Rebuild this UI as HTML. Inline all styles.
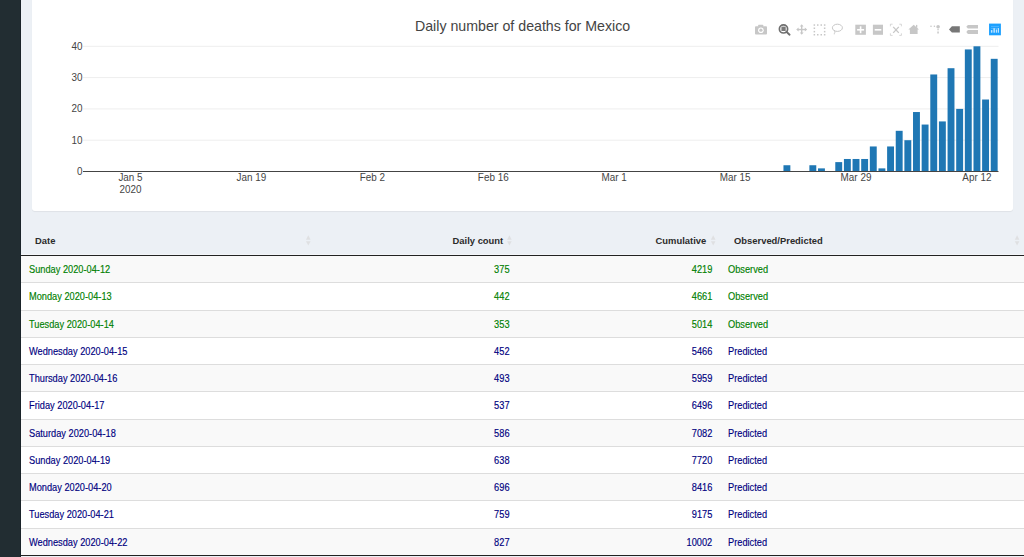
<!DOCTYPE html>
<html><head><meta charset="utf-8">
<style>
html,body{margin:0;padding:0;width:1024px;height:557px;overflow:hidden;background:#ecf0f5;font-family:"Liberation Sans",sans-serif;}
.side{position:absolute;left:0;top:0;width:21px;height:557px;background:#222d32;}
.card{position:absolute;left:32px;top:-40px;width:981px;height:251px;background:#fff;border-radius:3px;box-shadow:0 1px 1px rgba(0,0,0,0.06);}
svg.ch{position:absolute;left:0;top:0;}
.row{position:absolute;left:21px;width:1003px;}
.bl{position:absolute;left:21px;width:1003px;height:1px;background:#ddd;}
.hb{position:absolute;left:21px;width:1003px;height:1px;background:#222;}
.t{position:absolute;font-size:10.5px;line-height:normal;white-space:nowrap;transform:scaleX(0.88);transform-origin:0 0;-webkit-text-stroke:0.15px currentColor;}
.r{transform-origin:100% 0;}
.h{position:absolute;font-size:9.7px;font-weight:bold;color:#2b2b2b;white-space:nowrap;transform:scaleX(0.97);transform-origin:0 0;}
.hr{transform-origin:100% 0;}
</style></head><body>
<div class="side"></div><div style="position:absolute;left:20px;top:0;width:1px;height:557px;background:#1a2329"></div>
<div class="card"></div>
<svg class="ch" width="1024" height="211">
<rect x="83" y="139.70" width="915.5" height="1" fill="#eee"/>
<rect x="83" y="108.40" width="915.5" height="1" fill="#eee"/>
<rect x="83" y="77.10" width="915.5" height="1" fill="#eee"/>
<rect x="83" y="45.80" width="915.5" height="1" fill="#eee"/>
<rect x="783.46" y="165.24" width="6.9" height="6.26" fill="#1f77b4"/>
<rect x="809.37" y="165.24" width="6.9" height="6.26" fill="#1f77b4"/>
<rect x="818.01" y="168.37" width="6.9" height="3.13" fill="#1f77b4"/>
<rect x="835.28" y="162.11" width="6.9" height="9.39" fill="#1f77b4"/>
<rect x="843.92" y="158.98" width="6.9" height="12.52" fill="#1f77b4"/>
<rect x="852.56" y="158.98" width="6.9" height="12.52" fill="#1f77b4"/>
<rect x="861.19" y="158.98" width="6.9" height="12.52" fill="#1f77b4"/>
<rect x="869.83" y="146.46" width="6.9" height="25.04" fill="#1f77b4"/>
<rect x="878.47" y="168.37" width="6.9" height="3.13" fill="#1f77b4"/>
<rect x="887.11" y="146.46" width="6.9" height="25.04" fill="#1f77b4"/>
<rect x="895.74" y="130.81" width="6.9" height="40.69" fill="#1f77b4"/>
<rect x="904.38" y="140.20" width="6.9" height="31.30" fill="#1f77b4"/>
<rect x="913.02" y="112.03" width="6.9" height="59.47" fill="#1f77b4"/>
<rect x="921.65" y="124.55" width="6.9" height="46.95" fill="#1f77b4"/>
<rect x="930.29" y="74.47" width="6.9" height="97.03" fill="#1f77b4"/>
<rect x="938.93" y="121.42" width="6.9" height="50.08" fill="#1f77b4"/>
<rect x="947.57" y="68.21" width="6.9" height="103.29" fill="#1f77b4"/>
<rect x="956.20" y="108.90" width="6.9" height="62.60" fill="#1f77b4"/>
<rect x="964.84" y="49.43" width="6.9" height="122.07" fill="#1f77b4"/>
<rect x="973.48" y="46.30" width="6.9" height="125.20" fill="#1f77b4"/>
<rect x="982.11" y="99.51" width="6.9" height="71.99" fill="#1f77b4"/>
<rect x="990.75" y="58.82" width="6.9" height="112.68" fill="#1f77b4"/>
<rect x="83" y="171" width="915.5" height="1" fill="#444"/>
<g font-family="Liberation Sans, sans-serif" font-size="10.0" fill="#444">
<text transform="translate(82.4 174.90) scale(0.99 1)" text-anchor="end">0</text>
<text transform="translate(82.4 143.60) scale(0.99 1)" text-anchor="end">10</text>
<text transform="translate(82.4 112.30) scale(0.99 1)" text-anchor="end">20</text>
<text transform="translate(82.4 81.00) scale(0.99 1)" text-anchor="end">30</text>
<text transform="translate(82.4 49.70) scale(0.99 1)" text-anchor="end">40</text>
<text transform="translate(130.50 181) scale(0.99 1)" text-anchor="middle">Jan 5</text>
<text transform="translate(251.42 181) scale(0.99 1)" text-anchor="middle">Jan 19</text>
<text transform="translate(372.34 181) scale(0.99 1)" text-anchor="middle">Feb 2</text>
<text transform="translate(493.25 181) scale(0.99 1)" text-anchor="middle">Feb 16</text>
<text transform="translate(614.17 181) scale(0.99 1)" text-anchor="middle">Mar 1</text>
<text transform="translate(735.09 181) scale(0.99 1)" text-anchor="middle">Mar 15</text>
<text transform="translate(856.01 181) scale(0.99 1)" text-anchor="middle">Mar 29</text>
<text transform="translate(976.93 181) scale(0.99 1)" text-anchor="middle">Apr 12</text>
<text transform="translate(130.50 192.8) scale(0.99 1)" text-anchor="middle">2020</text>
</g>
<rect x="758.2" y="24.7" width="5" height="2.2" rx="0.5" fill="#c7c7c7"/>
<rect x="755" y="26.3" width="12" height="8.1" rx="0.9" fill="#c7c7c7"/>
<circle cx="760.9" cy="30.2" r="2.8" fill="#fff"/>
<circle cx="760.9" cy="30.2" r="1.6" fill="#c7c7c7"/>
<circle cx="783.5" cy="28.9" r="4.1" fill="none" stroke="#6f6f6f" stroke-width="1.7"/>
<rect x="781.4" y="26.6" width="4.3" height="4.4" fill="#7a7a7a"/>
<line x1="786.4" y1="31.8" x2="789.6" y2="34.7" stroke="#6f6f6f" stroke-width="1.9" stroke-linecap="round"/>
<g fill="#c7c7c7">
<rect x="797.5" y="28.85" width="8.4" height="1.4"/><rect x="801.0" y="25.6" width="1.4" height="7.9"/>
<polygon points="796.2,29.55 798.6,27.6 798.6,31.5"/><polygon points="807.2,29.55 804.8,27.6 804.8,31.5"/>
<polygon points="801.7,24.3 799.8,26.6 803.6,26.6"/><polygon points="801.7,34.7 799.8,32.4 803.6,32.4"/>
</g>
<g fill="#c7c7c7">
<rect x="813.6" y="24.3" width="1.5" height="1.5"/><rect x="813.6" y="34.0" width="1.5" height="1.5"/>
<rect x="817.0" y="24.3" width="1.5" height="1.5"/><rect x="817.0" y="34.0" width="1.5" height="1.5"/>
<rect x="820.5" y="24.3" width="1.5" height="1.5"/><rect x="820.5" y="34.0" width="1.5" height="1.5"/>
<rect x="823.9" y="24.3" width="1.5" height="1.5"/><rect x="823.9" y="34.0" width="1.5" height="1.5"/>
<rect x="813.6" y="27.5" width="1.5" height="1.5"/><rect x="823.9" y="27.5" width="1.5" height="1.5"/>
<rect x="813.6" y="30.9" width="1.5" height="1.5"/><rect x="823.9" y="30.9" width="1.5" height="1.5"/>
</g>
<ellipse cx="837.4" cy="27.8" rx="5.0" ry="3.6" fill="none" stroke="#c7c7c7" stroke-width="1"/>
<path d="M833.6 30.3 Q835.8 31.3 834.8 32.6 Q834.2 33.6 834.3 34.3" fill="none" stroke="#c7c7c7" stroke-width="1"/>
<rect x="855.3" y="24.7" width="10.6" height="10.1" fill="#c7c7c7"/>
<rect x="859.8" y="26.3" width="1.6" height="6.9" fill="#fff"/><rect x="857.1" y="29.0" width="7.0" height="1.6" fill="#fff"/>
<rect x="872.9" y="24.7" width="10.1" height="10.1" fill="#c7c7c7"/>
<rect x="874.7" y="29.0" width="6.6" height="1.6" fill="#fff"/>
<g stroke="#c7c7c7" fill="none" stroke-width="0.7">
<path d="M890.4 26.3 V24.2 H892.6"/><path d="M899.3 24.2 H901.4 V26.3"/><path d="M901.4 33.3 V35.4 H899.3"/><path d="M892.6 35.4 H890.4 V33.3"/>
</g>
<g stroke="#c7c7c7" fill="none" stroke-width="1.3">
<line x1="893.2" y1="26.9" x2="898.8" y2="32.9"/><line x1="898.8" y1="26.9" x2="893.2" y2="32.9"/>
</g>
<polygon points="908.4,29.6 913.7,24.7 919.0,29.6 917.6,29.6 917.6,34.1 909.9,34.1 909.9,29.6" fill="#c7c7c7"/>
<rect x="916.0" y="24.9" width="1.3" height="2.8" fill="#c7c7c7"/>
<g fill="#c7c7c7">
<circle cx="931.0" cy="26.2" r="0.8"/><circle cx="934.4" cy="26.2" r="0.8"/>
<circle cx="938.1" cy="26.7" r="1.8"/><rect x="937.4" y="28.8" width="1.3" height="1.5"/><rect x="937.3" y="31.5" width="1.5" height="2.0"/>
</g>
<polygon points="949.0,29.4 951.9,26.2 959.8,26.2 959.8,32.6 951.9,32.6" fill="#777"/>
<polygon points="966.3,26.8 967.9,25.0 978.0,25.0 978.0,28.6 967.9,28.6" fill="#c7c7c7"/>
<polygon points="966.3,32.1 967.9,30.1 978.0,30.1 978.0,34.1 967.9,34.1" fill="#c7c7c7"/>
<rect x="989.05" y="23.6" width="11.85" height="11.7" fill="#1ba0ff"/>
<g fill="#fff" opacity="0.72"><rect x="990.9" y="30.1" width="1.5" height="2.6"/><rect x="993.4" y="28.3" width="1.5" height="4.4"/><rect x="995.8" y="29.5" width="1.4" height="3.2"/><rect x="997.9" y="28.2" width="1.1" height="4.5"/></g>
<g fill="#fff" opacity="0.2"><rect x="991" y="25.9" width="8" height="1.2"/><rect x="991" y="28" width="8" height="1"/></g>
<text x="522.6" y="30.5" text-anchor="middle" font-family="Liberation Sans, sans-serif" font-size="14.2" fill="#444">Daily number of deaths for Mexico</text>
</svg>
<div class="row" style="top:255px;height:27px;background:#f9f9f9"></div>
<div class="t" style="left:28.6px;top:263.20px;color:#008000">Sunday 2020-04-12</div>
<div class="t r" style="right:514.9px;top:263.20px;color:#008000">375</div>
<div class="t r" style="right:311.4px;top:263.20px;color:#008000">4219</div>
<div class="t" style="left:727.8px;top:263.20px;color:#008000">Observed</div>
<div class="row" style="top:282px;height:28px;background:#fff"></div>
<div class="t" style="left:28.6px;top:290.45px;color:#008000">Monday 2020-04-13</div>
<div class="t r" style="right:514.9px;top:290.45px;color:#008000">442</div>
<div class="t r" style="right:311.4px;top:290.45px;color:#008000">4661</div>
<div class="t" style="left:727.8px;top:290.45px;color:#008000">Observed</div>
<div class="row" style="top:310px;height:27px;background:#f9f9f9"></div>
<div class="t" style="left:28.6px;top:317.70px;color:#008000">Tuesday 2020-04-14</div>
<div class="t r" style="right:514.9px;top:317.70px;color:#008000">353</div>
<div class="t r" style="right:311.4px;top:317.70px;color:#008000">5014</div>
<div class="t" style="left:727.8px;top:317.70px;color:#008000">Observed</div>
<div class="row" style="top:337px;height:27px;background:#fff"></div>
<div class="t" style="left:28.6px;top:344.95px;color:#000080">Wednesday 2020-04-15</div>
<div class="t r" style="right:514.9px;top:344.95px;color:#000080">452</div>
<div class="t r" style="right:311.4px;top:344.95px;color:#000080">5466</div>
<div class="t" style="left:727.8px;top:344.95px;color:#000080">Predicted</div>
<div class="row" style="top:364px;height:27px;background:#f9f9f9"></div>
<div class="t" style="left:28.6px;top:372.20px;color:#000080">Thursday 2020-04-16</div>
<div class="t r" style="right:514.9px;top:372.20px;color:#000080">493</div>
<div class="t r" style="right:311.4px;top:372.20px;color:#000080">5959</div>
<div class="t" style="left:727.8px;top:372.20px;color:#000080">Predicted</div>
<div class="row" style="top:391px;height:28px;background:#fff"></div>
<div class="t" style="left:28.6px;top:399.45px;color:#000080">Friday 2020-04-17</div>
<div class="t r" style="right:514.9px;top:399.45px;color:#000080">537</div>
<div class="t r" style="right:311.4px;top:399.45px;color:#000080">6496</div>
<div class="t" style="left:727.8px;top:399.45px;color:#000080">Predicted</div>
<div class="row" style="top:419px;height:27px;background:#f9f9f9"></div>
<div class="t" style="left:28.6px;top:426.70px;color:#000080">Saturday 2020-04-18</div>
<div class="t r" style="right:514.9px;top:426.70px;color:#000080">586</div>
<div class="t r" style="right:311.4px;top:426.70px;color:#000080">7082</div>
<div class="t" style="left:727.8px;top:426.70px;color:#000080">Predicted</div>
<div class="row" style="top:446px;height:27px;background:#fff"></div>
<div class="t" style="left:28.6px;top:453.95px;color:#000080">Sunday 2020-04-19</div>
<div class="t r" style="right:514.9px;top:453.95px;color:#000080">638</div>
<div class="t r" style="right:311.4px;top:453.95px;color:#000080">7720</div>
<div class="t" style="left:727.8px;top:453.95px;color:#000080">Predicted</div>
<div class="row" style="top:473px;height:27px;background:#f9f9f9"></div>
<div class="t" style="left:28.6px;top:481.20px;color:#000080">Monday 2020-04-20</div>
<div class="t r" style="right:514.9px;top:481.20px;color:#000080">696</div>
<div class="t r" style="right:311.4px;top:481.20px;color:#000080">8416</div>
<div class="t" style="left:727.8px;top:481.20px;color:#000080">Predicted</div>
<div class="row" style="top:500px;height:28px;background:#fff"></div>
<div class="t" style="left:28.6px;top:508.45px;color:#000080">Tuesday 2020-04-21</div>
<div class="t r" style="right:514.9px;top:508.45px;color:#000080">759</div>
<div class="t r" style="right:311.4px;top:508.45px;color:#000080">9175</div>
<div class="t" style="left:727.8px;top:508.45px;color:#000080">Predicted</div>
<div class="row" style="top:528px;height:27px;background:#f9f9f9"></div>
<div class="t" style="left:28.6px;top:535.70px;color:#000080">Wednesday 2020-04-22</div>
<div class="t r" style="right:514.9px;top:535.70px;color:#000080">827</div>
<div class="t r" style="right:311.4px;top:535.70px;color:#000080">10002</div>
<div class="t" style="left:727.8px;top:535.70px;color:#000080">Predicted</div>
<div class="bl" style="top:282px"></div>
<div class="bl" style="top:310px"></div>
<div class="bl" style="top:337px"></div>
<div class="bl" style="top:364px"></div>
<div class="bl" style="top:391px"></div>
<div class="bl" style="top:419px"></div>
<div class="bl" style="top:446px"></div>
<div class="bl" style="top:473px"></div>
<div class="bl" style="top:500px"></div>
<div class="bl" style="top:528px"></div>
<div class="hb" style="top:254px;background:#f4f6f9"></div>
<div class="hb" style="top:255px"></div>
<div class="hb" style="top:555px"></div>
<div class="h" style="left:34.7px;top:235.12px">Date</div>
<div class="h hr" style="right:521.0px;top:235.12px">Daily count</div>
<div class="h hr" style="right:317.5px;top:235.12px">Cumulative</div>
<div class="h" style="left:733.9px;top:235.12px">Observed/Predicted</div>
<svg style="position:absolute;left:0;top:225px" width="1024" height="30" viewBox="0 225 1024 30">
<polygon points="306.00,239.70 310.60,239.70 308.30,235.20" fill="#dfe0e2"/><polygon points="306.00,241.20 310.60,241.20 308.30,245.60" fill="#dfe0e2"/><polygon points="507.10,239.70 511.70,239.70 509.40,235.20" fill="#dfe0e2"/><polygon points="507.10,241.20 511.70,241.20 509.40,245.60" fill="#dfe0e2"/><polygon points="710.90,239.70 715.50,239.70 713.20,235.20" fill="#dfe0e2"/><polygon points="710.90,241.20 715.50,241.20 713.20,245.60" fill="#dfe0e2"/><polygon points="1014.80,239.70 1019.40,239.70 1017.10,235.20" fill="#dfe0e2"/><polygon points="1014.80,241.20 1019.40,241.20 1017.10,245.60" fill="#dfe0e2"/>
</svg>
</body></html>
